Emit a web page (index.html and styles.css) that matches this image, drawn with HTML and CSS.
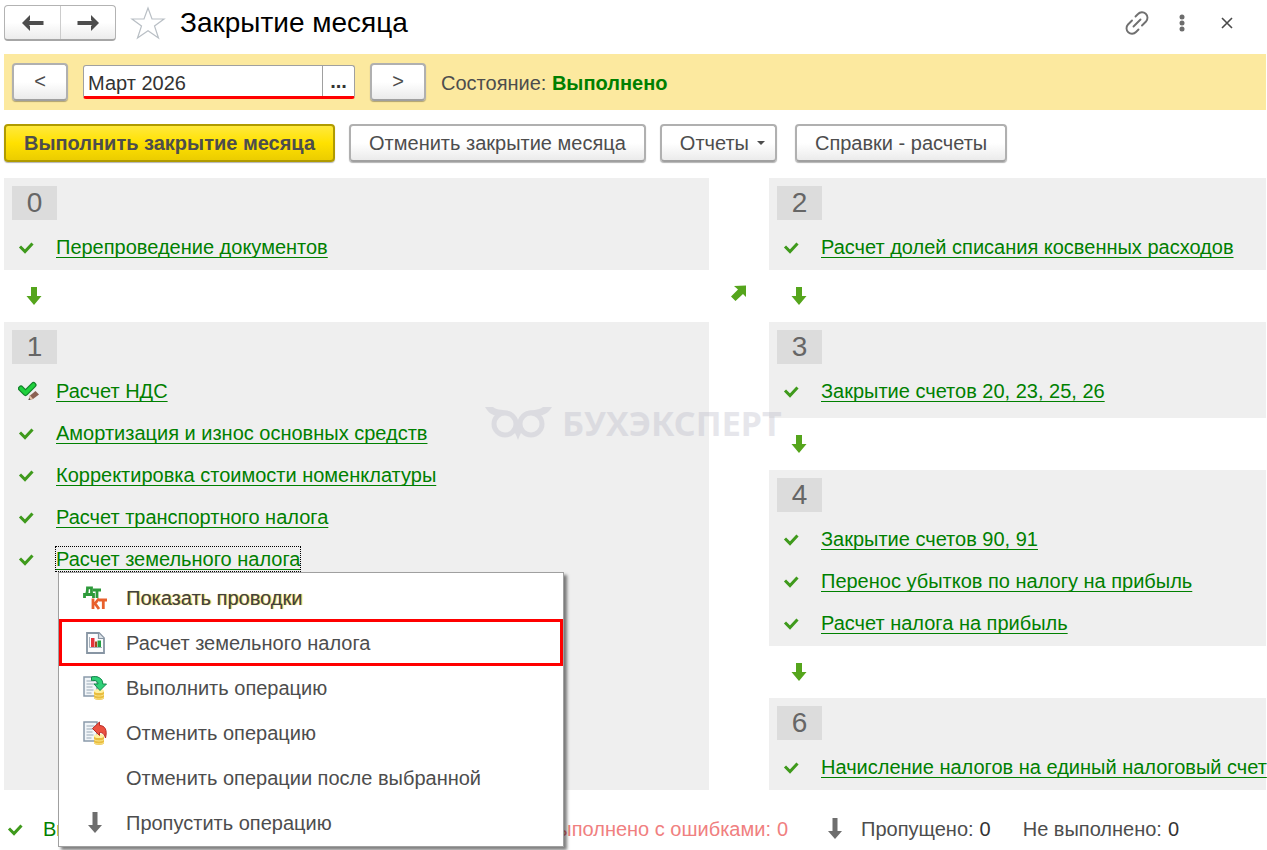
FILE: index.html
```html
<!DOCTYPE html>
<html lang="ru">
<head>
    <meta charset="UTF-8">
    <meta name="viewport" content="width=device-width, initial-scale=1.0">
    <title>Закрытие месяца</title>
    <link rel="stylesheet" href="styles.css">
</head>
<body>
    <!-- shared icons -->
    <svg class="sprite" aria-hidden="true">
        <symbol id="check" viewBox="0 0 16 14"><path d="M2 6.500 7 11.500 14.500 3.500" fill="none" stroke="#3f9a1c" stroke-width="3"/></symbol>
        <symbol id="down" viewBox="0 0 16 18"><path d="M5 0h6v9h4.500L8 18 .5 9H5z" fill="#55a51c"/></symbol>
        <symbol id="skip" viewBox="0 0 14 22"><path d="M4.500 0h5v13H14l-7 8-7-8h4.500z" fill="#6e6e6e"/></symbol>
        <symbol id="doc" viewBox="0 0 24 24">
            <path d="M1 1h13v19H1z" fill="#f1f5f8" stroke="#8a9bab" stroke-width="1.500"/>
            <path d="M3.500 5h8M3.500 8h8M3.500 11h6M3.500 14h7M3.500 17h5" stroke="#9aa9b6" stroke-width="1.200"/>
            <path d="M11 15v7c0 2.500 10 2.500 10 0v-7z" fill="#e9bd3e"/>
            <ellipse cx="16" cy="15" rx="5" ry="2" fill="#fff0a0"/>
            <path d="M11 18.500c2 2 8 2 10 0M11 21.500c2 2 8 2 10 0" fill="none" stroke="#fbe58a"/>
        </symbol>
    </svg>

    <header class="header">
        <div class="history">
            <button type="button" aria-label="Назад"><svg width="22" height="16" viewBox="0 0 22 16"><path d="M0 8 8 0v5l-1 1h14.500v4H7l1 1V16z" fill="#4d4d4d"/></svg></button>
            <button type="button" aria-label="Вперед"><svg width="22" height="16" viewBox="0 0 22 16"><path d="M22 8 14 0v5l1 1H.5v4H15l-1 1V16z" fill="#4d4d4d"/></svg></button>
        </div>
        <button type="button" class="icon-button" aria-label="В избранное"><svg width="36" height="34" viewBox="0 0 36 34"><path d="M18 2 22 13H34L24.500 20 28.500 32 18 24.700 7.500 32 11.500 20 2 13H14z" fill="#fff" stroke="#b9bfc5" stroke-width="1.200"/></svg></button>
        <h1>Закрытие месяца</h1>
        <div class="window-tools">
            <button type="button" class="icon-button" aria-label="Ссылка"><svg width="24" height="24" viewBox="0 0 24 24"><g fill="none" stroke="#707070" stroke-width="1.900" stroke-linecap="round"><path d="M10.500 5.500 13 3a5.300 5.300 0 0 1 8 7.500l-4 4"/><path d="M13.500 18.500 11 21a5.300 5.300 0 0 1-8-7.500l4-4"/><path d="M8.500 15.500 15.500 8.500"/></g></svg></button>
            <button type="button" class="icon-button" aria-label="Еще"><svg width="6" height="18" viewBox="0 0 6 18"><g fill="#6c6c6c"><circle cx="3" cy="3" r="2.500"/><circle cx="3" cy="9" r="2.500"/><circle cx="3" cy="15" r="2.500"/></g></svg></button>
            <button type="button" class="icon-button" aria-label="Закрыть"><svg width="12" height="12" viewBox="0 0 12 12"><path d="M1 1 11 11M11 1 1 11" stroke="#4a4a4a" stroke-width="1.600"/></svg></button>
        </div>
    </header>

    <div class="period-bar">
        <button type="button" class="button step" aria-label="Предыдущий месяц">&lt;</button>
        <div class="period">
            <input type="text" value="Март 2026" aria-label="Период">
            <button type="button" aria-label="Выбрать период">...</button>
        </div>
        <button type="button" class="button step" aria-label="Следующий месяц">&gt;</button>
        <div class="state">Состояние: <strong>Выполнено</strong></div>
    </div>

    <div class="actions">
        <button type="button" class="button primary">Выполнить закрытие месяца</button>
        <button type="button" class="button">Отменить закрытие месяца</button>
        <button type="button" class="button drop">Отчеты <span class="caret"></span></button>
        <button type="button" class="button">Справки - расчеты</button>
    </div>

    <main class="board">
        <div class="column">
            <section class="stage">
                <h2>0</h2>
                <ul>
                    <li><svg class="check"><use href="#check"/></svg><a href="#">Перепроведение документов</a></li>
                </ul>
            </section>
            <div class="next"><svg><use href="#down"/></svg></div>
            <section class="stage grow">
                <h2>1</h2>
                <ul>
                    <li>
                        <svg class="check manual" viewBox="0 0 22 20">
                            <path d="M3 7.500 7.500 12 15.500 4" fill="none" stroke="#12812a" stroke-width="6" stroke-linecap="round" stroke-linejoin="round"/>
                            <path d="M3 7.500 7.500 12 15.500 4" fill="none" stroke="#1fd03c" stroke-width="3.600" stroke-linecap="round" stroke-linejoin="round"/>
                            <path d="M10.500 19 12 14.500 17.500 10 21 13.500 15 18z" fill="#8b6152"/>
                            <path d="M10.500 19 12 14.500 15 18z" fill="#e6c3a5"/>
                            <path d="M10.500 19 11.200 17 12.500 18.500z" fill="#333"/>
                        </svg>
                        <a href="#">Расчет НДС</a>
                    </li>
                    <li><svg class="check"><use href="#check"/></svg><a href="#">Амортизация и износ основных средств</a></li>
                    <li><svg class="check"><use href="#check"/></svg><a href="#">Корректировка стоимости номенклатуры</a></li>
                    <li><svg class="check"><use href="#check"/></svg><a href="#">Расчет транспортного налога</a></li>
                    <li>
                        <svg class="check"><use href="#check"/></svg><a href="#" class="current">Расчет земельного налога</a>
                        <div class="menu">
                            <button type="button" class="default">
                                <svg viewBox="0 0 24 24">
                                    <g fill="none" stroke-width="2.800">
                                        <path d="M1.500 12V8.500H10.500V12M3.500 8.500C4.500 6 4.500 4 4.500 1.800H8.500V8.500M10 4H18M14 4V12" stroke="#2d9a3a"/>
                                        <path d="M10 12.500V23M10 17.500H12L16 12.500M12 17.500 16 23M16 14H24.500M20.300 14V23" stroke="#e8602c"/>
                                    </g>
                                </svg>
                                Показать проводки
                            </button>
                            <button type="button" class="marked">
                                <svg viewBox="0 0 24 24">
                                    <path d="M4 2H16L21 7V22H4z" fill="#fbfcfd" stroke="#8795a3" stroke-width="1.800"/>
                                    <path d="M15.500 2V7.500H21" fill="#dde3e8" stroke="#8795a3" stroke-width="1.200"/>
                                    <path d="M6.500 6V16.500H19" fill="none" stroke="#a9b3bc"/>
                                    <path d="M8 7H11.500V16H8z" fill="#e4333a"/>
                                    <path d="M12 10.500H14V16H12z" fill="#a44a1c"/>
                                    <path d="M14.500 9.500H18V16H14.500z" fill="#22a043"/>
                                </svg>
                                Расчет земельного налога
                            </button>
                            <button type="button">
                                <svg viewBox="0 0 24 24"><use href="#doc" width="24" height="24"/><path d="M8.500 1C14-.5 20 2 19.800 8H23.500L17 14.500 11 8H15C15 5 12 4 8.500 4.500z" fill="#2fd078" stroke="#128a4b"/></svg>
                                Выполнить операцию
                            </button>
                            <button type="button">
                                <svg viewBox="0 0 24 24"><use href="#doc" width="24" height="24"/><path d="M9.500 7.500 16.500 1V4.500C22 4.500 24.500 9 22.500 17 21 12.500 19.500 11.500 16.500 11.500V14.500z" fill="#ec5140" stroke="#b92b25"/></svg>
                                Отменить операцию
                            </button>
                            <button type="button"><span class="blank"></span>Отменить операции после выбранной</button>
                            <button type="button"><svg class="small"><use href="#skip"/></svg>Пропустить операцию</button>
                        </div>
                    </li>
                </ul>
            </section>
        </div>

        <div class="across"><svg width="18" height="18" viewBox="0 0 18 18"><path d="M4 2 16 1.500 16 13 13 10 5.500 17 1 12.500 8 5.500z" fill="#55a51c"/></svg></div>

        <div class="column">
            <section class="stage">
                <h2>2</h2>
                <ul>
                    <li><svg class="check"><use href="#check"/></svg><a href="#">Расчет долей списания косвенных расходов</a></li>
                </ul>
            </section>
            <div class="next"><svg><use href="#down"/></svg></div>
            <section class="stage grow">
                <h2>3</h2>
                <ul>
                    <li><svg class="check"><use href="#check"/></svg><a href="#">Закрытие счетов 20, 23, 25, 26</a></li>
                </ul>
            </section>
            <div class="next"><svg><use href="#down"/></svg></div>
            <section class="stage">
                <h2>4</h2>
                <ul>
                    <li><svg class="check"><use href="#check"/></svg><a href="#">Закрытие счетов 90, 91</a></li>
                    <li><svg class="check"><use href="#check"/></svg><a href="#">Перенос убытков по налогу на прибыль</a></li>
                    <li><svg class="check"><use href="#check"/></svg><a href="#">Расчет налога на прибыль</a></li>
                </ul>
            </section>
            <div class="next"><svg><use href="#down"/></svg></div>
            <section class="stage">
                <h2>6</h2>
                <ul>
                    <li><svg class="check"><use href="#check"/></svg><a href="#">Начисление налогов на единый налоговый счет</a></li>
                </ul>
            </section>
        </div>

        <div class="watermark">
            <svg width="68" height="34" viewBox="0 0 68 34">
                <g fill="none" stroke="#b2b2c2" stroke-width="5"><circle cx="20" cy="18" r="11"/><circle cx="46" cy="18" r="11"/></g>
                <path d="M0 1H8C13 5 19 3 26 6 30 8 32 12 33 15 34 12 36 8 40 6 47 3 53 5 58 1H67C63 8 58 9 54 10 52 6 46 4 42 8 36 12 36 20 38 24 36 26 35 29 33 34 31 29 30 26 28 24 30 20 30 12 24 8 20 4 14 6 12 10 8 9 4 8 0 1z" fill="#b2b2c2"/>
            </svg>
            <span>БУХЭКСПЕРТ</span>
        </div>
    </main>

    <footer class="legend">
        <div class="done"><svg class="check"><use href="#check"/></svg>Выполнено</div>
        <div class="failed">Выполнено с ошибками: <span>0</span></div>
        <div class="skipped"><svg class="small"><use href="#skip"/></svg>Пропущено: <b>0</b></div>
        <div>Не выполнено: <b>0</b></div>
    </footer>
</body>
</html>
```
FILE: styles.css
```css
* {
    margin: 0;
    padding: 0;
    box-sizing: border-box;
}

body {
    display: flex;
    flex-direction: column;
    min-height: 100vh;
    padding: 0 1px 0 4px;
    background: #fff;
    color: #4d4d4d;
    font-family: "Liberation Sans", Arial, sans-serif;
    font-size: 20px;
    line-height: 24px;
}

button, input {
    font: inherit;
    color: inherit;
}

svg {
    display: block;
    flex: none;
}

.sprite {
    display: none;
}

/* Header */
.header {
    display: flex;
    align-items: center;
    height: 54px;
    padding-bottom: 8px;
}

.history {
    display: flex;
    height: 36px;
    margin-right: 14px;
    border: 1px solid #b3b3b3;
    border-bottom: 2px solid #a6a6a6;
    border-radius: 4px;
    background: linear-gradient(#fff 50%, #ececec);
}

.history button {
    display: flex;
    align-items: center;
    justify-content: center;
    width: 55px;
    border: none;
    background: none;
}

.history button + button {
    border-left: 1px solid #ccc;
}

.icon-button {
    border: none;
    background: none;
}

h1 {
    margin-left: 14px;
    color: #000;
    font-size: 28px;
    font-weight: 400;
    line-height: 32px;
}

.window-tools {
    display: flex;
    align-items: center;
    margin-left: auto;
    padding-right: 17px;
}

.window-tools .icon-button {
    display: flex;
    align-items: center;
    justify-content: center;
    width: 45px;
}

/* Period */
.period-bar {
    display: flex;
    align-items: center;
    gap: 15px;
    height: 56px;
    padding: 0 8px;
    background: #fce99f;
}

.button {
    height: 38px;
    padding: 0 18px;
    border: 2px solid #b0b0b0;
    border-bottom-color: #a0a0a0;
    border-radius: 4px;
    background: linear-gradient(#fff 50%, #ebebeb);
    box-shadow: 0 1px 1px rgba(0, 0, 0, 0.3);
    white-space: nowrap;
}

.step {
    width: 56px;
    padding: 0 0 2px;
}

.period {
    display: flex;
    width: 272px;
    height: 34px;
    border: 1px solid #a0a0a0;
    border-bottom: 3px solid #f00;
    border-radius: 3px;
    background: #fff;
    color: #333;
}

.period input {
    flex: 1;
    min-width: 0;
    padding: 3px 0 0 4px;
    border: none;
    background: none;
    outline: none;
}

.period button {
    width: 32px;
    border: none;
    border-left: 1px solid #a0a0a0;
    background: none;
    font-weight: 700;
}

.state {
    padding-top: 2px;
}

.state strong {
    color: #008000;
}

/* Actions */
.actions {
    display: flex;
    gap: 14px;
    padding: 14px 0 16px;
}

.primary {
    border-color: #b09b00;
    background: linear-gradient(#ffe93d, #ffe100 50%, #ebcd00);
    font-weight: 700;
}

.drop {
    display: flex;
    align-items: center;
    gap: 8px;
    margin-right: 4px;
    padding-right: 10px;
}

.caret {
    border: 4px solid transparent;
    border-top-color: #4d4d4d;
    border-bottom: none;
}

/* Stages */
.board {
    position: relative;
    display: grid;
    flex: 1;
    grid-template-columns: 705fr 60px 497fr;
}

.column {
    display: flex;
    flex-direction: column;
    min-width: 0;
}

.stage {
    padding: 8px 8px 2px;
    background: #efefef;
}

.grow {
    flex: 1;
}

.stage h2 {
    width: 45px;
    margin-bottom: 6px;
    background: #dcdcdc;
    color: #666;
    font-size: 28px;
    font-weight: 400;
    line-height: 34px;
    text-align: center;
}

.stage ul {
    list-style: none;
}

.stage li {
    position: relative;
    display: flex;
    align-items: center;
    height: 42px;
    padding-left: 6px;
    white-space: nowrap;
}

.stage a {
    color: #008000;
    text-decoration-thickness: 1px;
    text-decoration-skip-ink: none;
    text-underline-offset: 3px;
}

.check {
    width: 16px;
    height: 14px;
    margin-right: 22px;
}

.manual {
    width: 22px;
    height: 20px;
    margin-right: 16px;
}

.current {
    outline: 1px dotted #000;
}

.next {
    display: flex;
    align-items: center;
    height: 52px;
    padding-left: 22px;
}

.next svg {
    width: 16px;
    height: 18px;
}

.across {
    display: flex;
    justify-content: center;
    padding-top: 106px;
}

/* Context menu */
.menu {
    position: absolute;
    z-index: 2;
    top: 34px;
    left: 46px;
    width: 506px;
    padding: 2px 0 1px;
    border: 1px solid #a0a0a0;
    background: #fff;
    box-shadow: 3px 3px 3px rgba(0, 0, 0, 0.5);
}

.menu button {
    display: flex;
    align-items: center;
    gap: 19px;
    width: 100%;
    height: 45px;
    padding-left: 24px;
    border: none;
    background: none;
    text-align: left;
}

.menu svg, .blank {
    width: 24px;
    height: 24px;
}

.menu .default {
    color: #404040;
    text-shadow: 1px 0 1px #e8c840;
}

.menu .marked {
    height: 47px;
    margin: -1px 0;
    padding-left: 21px;
    border: 3px solid #f00;
}

.menu .small {
    height: 22px;
}

/* Watermark */
.watermark {
    position: absolute;
    z-index: 1;
    top: 228px;
    left: 481px;
    display: flex;
    align-items: center;
    gap: 9px;
    color: #b2b2c2;
    font-family: "Noto Sans", sans-serif;
    font-size: 34px;
    font-weight: 700;
    line-height: 34px;
    opacity: 0.31;
    pointer-events: none;
}

/* Legend */
.legend {
    display: flex;
    height: 60px;
    padding-top: 18px;
    line-height: 42px;
    white-space: nowrap;
}

.legend div {
    display: flex;
    align-items: center;
    gap: 6px;
}

.legend b {
    color: #333;
    font-weight: 400;
}

.legend .check {
    margin: 0 14px 0 3px;
}

.legend .small {
    width: 14px;
    height: 22px;
    margin-right: 13px;
}

.legend .done {
    width: 540px;
    color: #008000;
}

.legend .failed {
    margin-right: 40px;
    color: #f08080;
}

.legend .skipped {
    margin-right: 32px;
}
```
